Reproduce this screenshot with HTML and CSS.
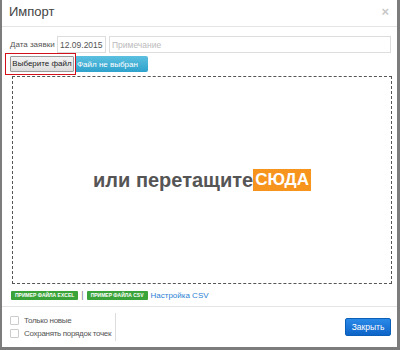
FILE: index.html
```html
<!DOCTYPE html>
<html lang="ru">
<head>
    <meta charset="UTF-8">
    <title>Импорт</title>
    <link rel="stylesheet" href="styles.css">
</head>
<body>
    <div class="modal">
        <div class="modal-header">
            <h3>Импорт</h3>
            <span class="close">&times;</span>
        </div>
        <div class="modal-body">
            <div class="row">
                <label>Дата заявки</label>
                <input type="text" class="date" value="12.09.2015">
                <input type="text" class="note" placeholder="Примечание">
            </div>
            <div class="file-row">
                <div class="file-bar">
                    <span class="file-btn-wrap"><span class="file-btn">Выберите файл</span></span>
                    <span class="file-name">Файл не выбран</span>
                </div>
            </div>
            <div class="dropzone">
                <span class="drop-text">или перетащите</span><span class="drop-here">СЮДА</span>
            </div>
            <div class="links">
                <span class="badge">ПРИМЕР ФАЙЛА EXCEL</span>
                <span class="sep">|</span>
                <span class="badge">ПРИМЕР ФАЙЛА CSV</span>
                <a href="#" class="link">Настройка CSV</a>
            </div>
        </div>
        <div class="modal-footer">
            <div class="options">
                <label class="check"><span class="box"></span>Только новые</label>
                <label class="check"><span class="box"></span>Сохранять порядок точек</label>
            </div>
            <button class="btn-close">Закрыть</button>
        </div>
    </div>
</body>
</html>
```
FILE: styles.css
```css
body {
    margin: 0;
    background: #7c7c7c;
    font-family: "Liberation Sans", Arial, sans-serif;
    font-size: 8px;
    color: #555;
    white-space: nowrap;
}
.modal {
    margin-left: 2px;
    width: 395px;
    height: 347px;
    background: #fff;
    display: flex;
    flex-direction: column;
}
.modal-header {
    height: 26px;
    border-bottom: 1px solid #e5e5e5;
    display: flex;
    align-items: center;
    justify-content: space-between;
    padding: 0 8px 0 7px;
}
.modal-header h3 {
    margin: 0;
    font-size: 13px;
    font-weight: normal;
    color: #444;
    position: relative;
    top: -2px;
}
.close {
    font-size: 13px;
    color: #c8c8c8;
    font-weight: bold;
    position: relative;
    top: -2px;
}
.modal-body {
    flex: 1;
    padding: 9px 6px 0 7px;
}
.row {
    display: flex;
    align-items: center;
    height: 17px;
}
.row label {
    width: 47px;
    padding-left: 1px;
    font-size: 8px;
    color: #555;
}
.row input {
    height: 17px;
    box-sizing: border-box;
    border: 1px solid #ddd;
    font-family: inherit;
    font-size: 8.5px;
    padding: 0 2px;
    margin: 0;
    color: #555;
    outline: none;
}
.row .date {
    width: 49px;
}
.row .note {
    margin-left: 3px;
    width: 282px;
}
.row .note::placeholder {
    color: #bbb;
}
.file-row {
    margin-top: 1px;
    height: 19px;
}
.file-bar {
    display: inline-flex;
    align-items: center;
    width: 139px;
    height: 16px;
    margin-top: 2px;
    background: linear-gradient(#5cc0e0, #2ea2cc);
    border-radius: 2px;
}
.file-btn-wrap {
    border: 1px solid #d0101a;
    padding: 2px 1px 2px 4px;
    margin-left: -4px;
    background: #fff;
}
.file-btn {
    display: block;
    width: 62px;
    height: 14px;
    line-height: 14px;
    text-align: center;
    background: linear-gradient(#f4f4f4, #dcdcdc);
    border: 1px solid #9a9a9a;
    border-radius: 1px;
    color: #222;
}
.file-name {
    color: #fff;
    margin-left: 1px;
}
.dropzone {
    margin: 3px 0 0 3px;
    width: 378px;
    height: 206px;
    border: 1px dashed #555;
    display: flex;
    align-items: center;
    justify-content: center;
    font-size: 20px;
    font-weight: bold;
}
.drop-text {
    color: #555;
}
.drop-here {
    background: #f7941d;
    color: #fff;
    padding: 0 2px;
    font-size: 17px;
    line-height: 22px;
}
.links {
    margin-top: 6px;
    display: flex;
    align-items: center;
    height: 10px;
    padding-left: 2px;
}
.badge {
    background: #3aa33a;
    color: #fff;
    font-size: 5px;
    font-weight: bold;
    padding: 1px 4px;
    border-radius: 1px;
    line-height: 7px;
}
.sep {
    margin: 0 3px;
    color: #777;
    font-size: 9px;
}
.link {
    color: #2a7fd4;
    text-decoration: none;
    margin-left: 3px;
    font-size: 8px;
}
.modal-footer {
    height: 40px;
    border-top: 1px solid #e5e5e5;
    display: flex;
    align-items: center;
    padding: 0 6px 0 8px;
}
.options {
    display: flex;
    flex-direction: column;
    gap: 4px;
    padding-right: 4px;
    border-right: 1px solid #ddd;
    height: 28px;
    justify-content: center;
}
.check {
    display: flex;
    align-items: center;
    color: #555;
    font-size: 8px;
    letter-spacing: -0.3px;
}
.box {
    flex-shrink: 0;
    width: 7px;
    height: 7px;
    border: 1px solid #ccc;
    border-radius: 1px;
    margin-right: 5px;
}
.btn-close {
    margin-left: auto;
    width: 46px;
    height: 18px;
    border: 1px solid #0b5fb8;
    border-radius: 2px;
    background: linear-gradient(#2a8ae8, #0e64c8);
    color: #fff;
    font-family: inherit;
    font-size: 8.5px;
    padding: 0;
}
```
